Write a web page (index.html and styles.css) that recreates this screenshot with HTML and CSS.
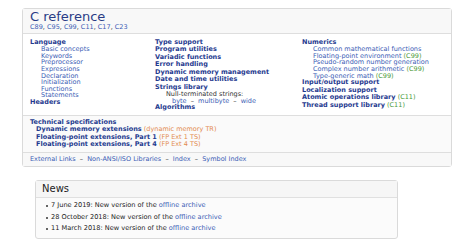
FILE: index.html
```html
<!DOCTYPE html>
<html lang="en">
<head>
  <meta charset="UTF-8">
  <title>C reference - cppreference.com</title>
  <link rel="stylesheet" href="styles.css">
</head>
<body>

<div class="mainpage">
    <div class="mp-head">
        <div class="mp-title">C reference</div>
        <div class="mp-revs"><a href="#">C89</a>, <a href="#">C95</a>, <a href="#">C99</a>, <a href="#">C11</a>, <a href="#">C17</a>, <a href="#">C23</a></div>
    </div>

    <div class="mp-body">
        <div class="mp-col">
            <a class="big" href="#">Language</a>
            <div class="sub">
                <a href="#">Basic concepts</a>
                <a href="#">Keywords</a>
                <a href="#">Preprocessor</a>
                <a href="#">Expressions</a>
                <a href="#">Declaration</a>
                <a href="#">Initialization</a>
                <a href="#">Functions</a>
                <a href="#">Statements</a>
            </div>
            <a class="big" href="#">Headers</a>
        </div>
        <div class="mp-col">
            <a class="big" href="#">Type support</a>
            <a class="big" href="#">Program utilities</a>
            <a class="big" href="#">Variadic functions</a>
            <a class="big" href="#">Error handling</a>
            <a class="big" href="#">Dynamic memory management</a>
            <a class="big" href="#">Date and time utilities</a>
            <a class="big" href="#">Strings library</a>
            <div class="strings">
                <span class="plain">Null-terminated strings:</span>
                <span class="kinds"><a href="#">byte</a> &nbsp;&ndash;&nbsp; <a href="#">multibyte</a> &nbsp;&ndash;&nbsp; <a href="#">wide</a></span>
            </div>
            <a class="big" href="#">Algorithms</a>
        </div>
        <div class="mp-col">
            <a class="big" href="#">Numerics</a>
            <div class="sub">
                <a href="#">Common mathematical functions</a>
                <span><a href="#">Floating-point environment</a> <span class="rev">(C99)</span></span>
                <a href="#">Pseudo-random number generation</a>
                <span><a href="#">Complex number arithmetic</a> <span class="rev">(C99)</span></span>
                <span><a href="#">Type-generic math</a> <span class="rev">(C99)</span></span>
            </div>
            <a class="big" href="#">Input/output support</a>
            <a class="big" href="#">Localization support</a>
            <span><a class="big" href="#">Atomic operations library</a> <span class="rev">(C11)</span></span>
            <span><a class="big" href="#">Thread support library</a> <span class="rev">(C11)</span></span>
        </div>
    </div>

    <div class="mp-tech">
        <a class="big" href="#">Technical specifications</a>
        <div class="tech-list">
            <span><a class="big" href="#">Dynamic memory extensions</a> <span class="ts">(dynamic memory TR)</span></span>
            <span><a class="big" href="#">Floating-point extensions, Part 1</a> <span class="ts">(FP Ext 1 TS)</span></span>
            <span><a class="big" href="#">Floating-point extensions, Part 4</a> <span class="ts">(FP Ext 4 TS)</span></span>
        </div>
    </div>

    <div class="mp-foot">
        <a href="#">External Links</a> &nbsp;&ndash;&nbsp; <a href="#">Non-ANSI/ISO Libraries</a> &nbsp;&ndash;&nbsp; <a href="#">Index</a> &nbsp;&ndash;&nbsp; <a href="#">Symbol Index</a>
    </div>
</div>

<!-- News -->
<div class="news">
    <div class="news-head">News</div>
    <ul class="news-list">
        <li>7 June 2019: New version of the <a href="#">offline archive</a></li>
        <li>28 October 2018: New version of the <a href="#">offline archive</a></li>
        <li>11 March 2018: New version of the <a href="#">offline archive</a></li>
    </ul>
</div>

</body>
</html>
```

FILE: styles.css
```css
* {
    font-family: "DejaVu Sans", Verdana, sans-serif;
    box-sizing: border-box;
}

body {
    margin: 0;
    padding-top: 8px;
    background-color: white;
    color: #222;
}

a {
    color: #3a5cb5;
    text-decoration: none;
}

a.big {
    color: #1f3a8f;
    font-weight: bold;
}

.mainpage {
    width: 430px;
    margin-left: 22px;
    border: 1px solid #dadada;
    border-radius: 3px;
    font-size: 6.5px;
}

.mp-head {
    background-color: #f8f8f8;
    padding: 0 7px 1px 7px;
    border-bottom: 1px solid #dedede;
}

.mp-title {
    font-size: 13px;
    line-height: 15.2px;
    color: #2a3c86;
}

.mp-revs {
    line-height: 7.6px;
}

.mp-body {
    display: grid;
    grid-template-columns: 125px 147px 1fr;
    padding: 5px 7px 3px 7px;
    background-color: white;
    border-bottom: 1px solid #dedede;
}

.mp-col {
    display: flex;
    flex-direction: column;
    align-items: flex-start;
}

.mp-col > a.big,
.mp-col > span {
    line-height: 7.5px;
}

.sub {
    display: flex;
    flex-direction: column;
    align-items: flex-start;
    padding-left: 11px;
    line-height: 6.6px;
}

.strings {
    display: flex;
    flex-direction: column;
    padding-left: 11px;
    line-height: 6.6px;
}

.strings .plain {
    color: #333;
}

.strings .kinds {
    padding-left: 6px;
    color: #333;
}

.rev {
    color: #4a9a3a;
    font-weight: normal;
}

.ts {
    color: #e38a4f;
}

.mp-tech {
    background-color: #fafafa;
    padding: 3px 7px 3px 7px;
    border-bottom: 1px solid #dedede;
    line-height: 7.5px;
}

.tech-list {
    display: flex;
    flex-direction: column;
    padding-left: 6px;
}

.mp-foot {
    background-color: #f8f8f8;
    padding: 3px 7px 3px 7px;
    line-height: 7.5px;
    color: #333;
}

/* News */
.news {
    width: 363px;
    margin-left: 35px;
    margin-top: 13px;
    border: 1px solid #dadada;
    border-radius: 3px;
    background-color: #fbfbfb;
}

.news-head {
    font-size: 10px;
    line-height: 12px;
    padding: 2px 6px 2px 6px;
    background-color: #f6f6f6;
    border-bottom: 1px solid #e0e0e0;
    color: #222;
}

.news-list {
    list-style: none;
    margin: 0;
    padding: 4px 6px 5px 10px;
    font-size: 6.6px;
    line-height: 7.5px;
}

.news-list li {
    display: flex;
    align-items: center;
    margin-bottom: 3.8px;
}

.news-list li:last-child {
    margin-bottom: 0;
}

.news-list li::before {
    content: "";
    width: 2px;
    height: 2px;
    border-radius: 50%;
    background-color: #333;
    margin-right: 3px;
}

.news-list li a {
    margin-left: 0.3em;
}
```
